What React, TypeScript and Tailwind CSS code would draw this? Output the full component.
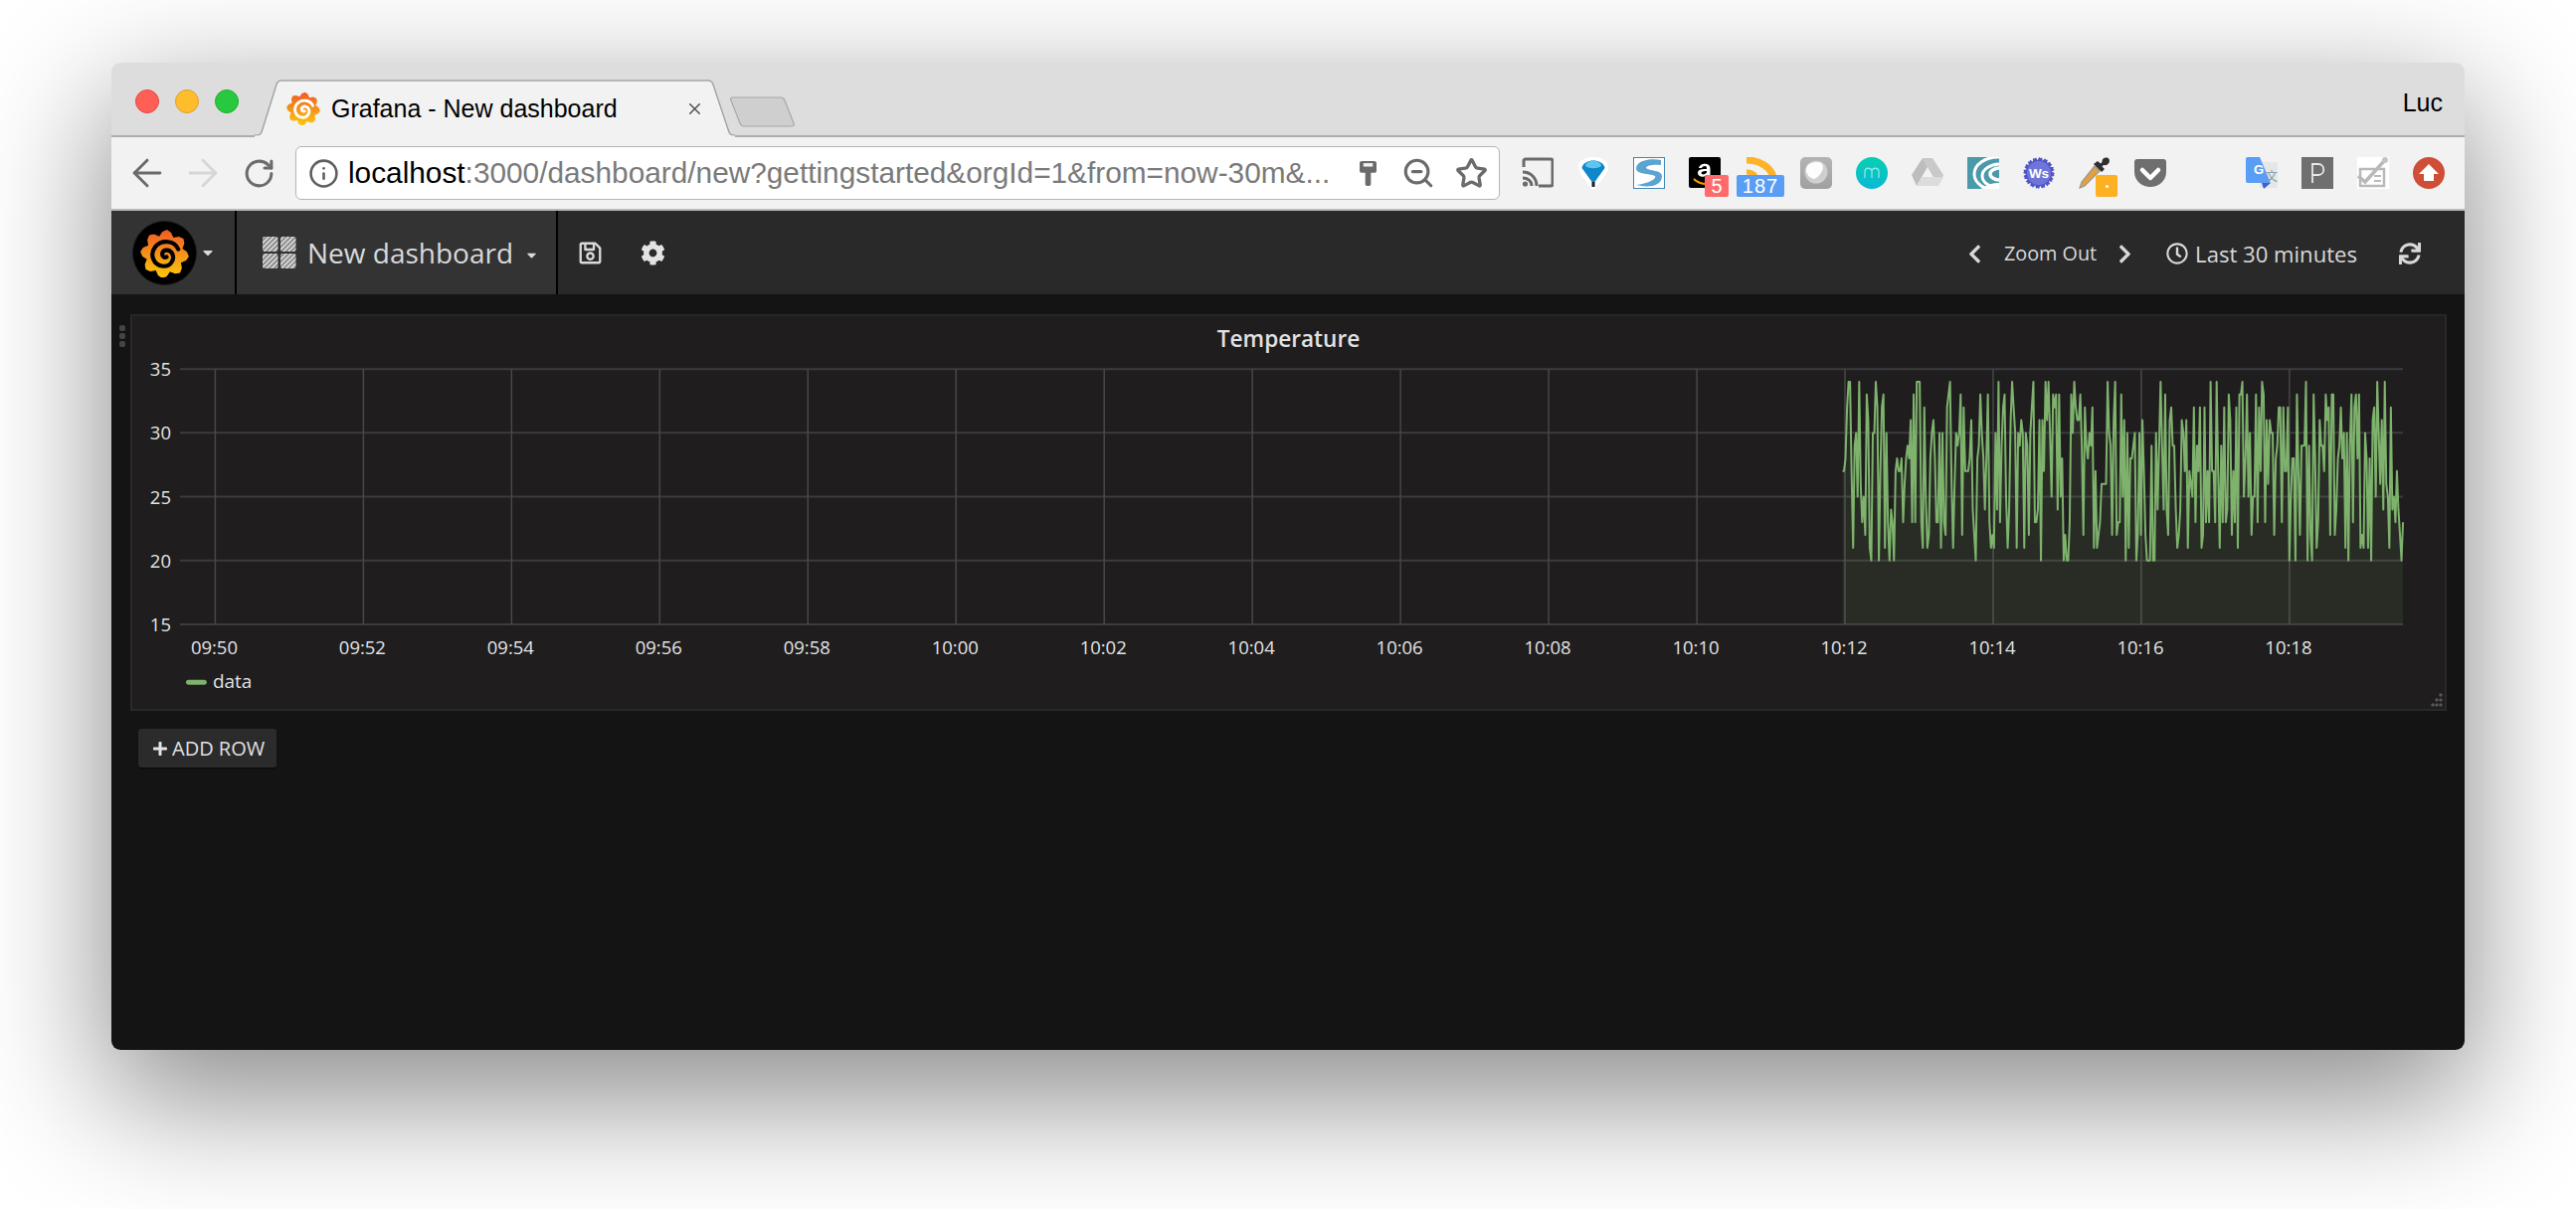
import React from "react";
import { ArrowLeft, ArrowRight, RotateCw, Info, ZoomOut, Star, X } from "lucide-react";
import { FaRegSave, FaCog, FaChevronLeft, FaChevronRight, FaRegClock, FaSync, FaPlus, FaCaretDown } from "react-icons/fa";

function gearPath(teeth: number, R: number, r: number, cx: number, cy: number) {
  const pts: string[] = [];
  const n = teeth * 4;
  for (let i = 0; i < n; i++) {
    const a = (i / n) * Math.PI * 2 - Math.PI / 2 + 0.1;
    const rad = i % 4 === 0 ? R : i % 4 === 2 ? r : (R + r) / 2 + 2;
    pts.push(`${(cx + rad * Math.cos(a)).toFixed(1)},${(cy + rad * Math.sin(a)).toFixed(1)}`);
  }
  return pts.join(" ");
}

function GrafanaMark({ size, inner, id }: { size: number; inner: string; id: string }) {
  return (
    <svg width={size} height={size} viewBox="0 0 100 100">
      <defs>
        <linearGradient id={id} x1="0" y1="0" x2="0" y2="1">
          <stop offset="0" stopColor="#f05a28" />
          <stop offset="1" stopColor="#fbca0a" />
        </linearGradient>
      </defs>
      <polygon points={gearPath(8, 50, 38, 50, 52)} fill={`url(#${id})`} />
      <path
        d="M78 42 C70 24 44 22 31 37 C19 52 26 75 47 77 C63 78 72 62 65 50 C59 41 46 43 45 52 C45 58 50 60 54 58"
        fill="none"
        stroke={inner}
        strokeWidth="8.500"
        strokeLinecap="round"
      />
    </svg>
  );
}

function DashIcon() {
  return (
    <svg width="34" height="32" viewBox="0 0 34 32">
      <defs>
        <pattern id="hatch" width="3.500" height="3.500" patternUnits="userSpaceOnUse" patternTransform="rotate(-45)">
          <rect width="3.500" height="3.500" fill="#7d7d7d" />
          <rect width="3.500" height="2" fill="#d8d8d8" />
        </pattern>
      </defs>
      <rect x="0" y="0" width="15.5" height="15" rx="2" fill="url(#hatch)" />
      <rect x="18" y="0" width="15.5" height="15" rx="2" fill="url(#hatch)" />
      <rect x="0" y="17" width="15.5" height="15" rx="2" fill="url(#hatch)" />
      <rect x="18" y="17" width="15.5" height="15" rx="2" fill="url(#hatch)" />
    </svg>
  );
}

function Badge({ bg, w, left, children }: { bg: string; w: string; left: string; children?: React.ReactNode }) {
  return (
    <span className={`absolute top-[18px] h-[22px] rounded-[2px] flex items-center justify-center text-white text-[20px] leading-none font-['Liberation_Sans',sans-serif] ${bg} ${w} ${left}`}>
      {children}
    </span>
  );
}

function Ext({ children }: { children: React.ReactNode }) {
  return (
    <div className="w-[56px] h-[54px] flex items-center justify-center">
      <div className="relative w-[32px] h-[32px]">{children}</div>
    </div>
  );
}

const svg32 = { width: 32, height: 32, viewBox: "0 0 32 32", className: "block" };

function Extensions() {
  return (
    <>
      <Ext>
        <svg {...svg32}>
          <path d="M2 10 V4 a2 2 0 0 1 2-2 H29 a2 2 0 0 1 2 2 V27 a2 2 0 0 1-2 2 H17" fill="none" stroke="#6b6b6b" strokeWidth="3" />
          <path d="M1 15 C9 15 15 21 15 29 M1 21 C6 21 10 24 10 29" fill="none" stroke="#6b6b6b" strokeWidth="3" />
          <circle cx="3.5" cy="27" r="2.6" fill="#6b6b6b" />
        </svg>
      </Ext>
      <Ext>
        <svg {...svg32}>
          <path d="M18 32 L14 32 C10 25 1 17 1 10 C1 3 9 0 16 0 C23 0 31 3 31 10 C31 17 22 25 18 32 Z" fill="#fff" />
          <path d="M16 27 L4.500 11 C5 6 11 3.500 16 3.500 C21 3.500 27 6 27.500 11 Z" fill="#0f87c9" />
          <path d="M16 3.500 C12 3.500 8 6 8 9 C12 12 20 12 24 9 C24 6 20 3.500 16 3.500 Z" fill="#5cc6ee" />
          <path d="M14.500 25 h3 v5 h-3 z" fill="#123" />
        </svg>
      </Ext>
      <Ext>
        <svg {...svg32}>
          <rect x="0.5" y="0.5" width="31" height="31" fill="#fff" stroke="#3e87b8" />
          <path d="M28 3 C18 1 4 3 3 11 C3 18 16 16 22 19 C24 22 14 27 3 28 C14 31 29 30 29 19 C29 13 16 14 13 11 C13 8 22 7 28 8 Z" fill="#5ba4d2" />
        </svg>
      </Ext>
      <Ext>
        <svg {...svg32}>
          <rect x="0" y="0" width="32" height="31" rx="2" fill="#000" />
          <path d="M10 11 C11 6 21 5 21.500 11 V20 H18 V18 C15 21 9 20 9 16 C9 12 14 12 18 12 V11 C18 8 13.500 9 13 11 Z M18 14 C15 14 12.500 14.500 12.500 16 C12.500 18 16.500 18 18 15.500 Z" fill="#fff" />
          <path d="M5 22 C9 26 13 27 18 27" stroke="#f90" strokeWidth="2" fill="none" />
        </svg>
        <Badge bg="bg-[#ff6b6b]" w="w-[24px]" left="left-[16px]">5</Badge>
      </Ext>
      <Ext>
        <svg width="32" height="20" viewBox="0 0 32 20" className="block">
          <path d="M2 3 C15 3 26 10 29 20" fill="none" stroke="#fdb22a" strokeWidth="7" />
          <path d="M2 15 C5 15 9 16 11 19" fill="none" stroke="#fdb22a" strokeWidth="5" />
        </svg>
        <Badge bg="bg-[#5a9df5]" w="w-[48px]" left="left-[-8px]"><span className="tracking-[1px]">187</span></Badge>
      </Ext>
      <Ext>
        <svg {...svg32}>
          <defs>
            <linearGradient id="gr1" x1="0" y1="0" x2="0" y2="1"><stop offset="0" stopColor="#b4b4b4" /><stop offset="1" stopColor="#a0a0a0" /></linearGradient>
          </defs>
          <rect width="32" height="32" rx="5" fill="url(#gr1)" />
          <circle cx="16" cy="15" r="11.500" fill="#cfcfcf" />
          <path d="M6 13 C6 7 12 5 17 5 C23 5 24 10 22 14 C20 18 17 21 14 22 C9 21 6 17 6 13 Z" fill="#fdfdfd" />
        </svg>
      </Ext>
      <Ext>
        <svg {...svg32}>
          <defs>
            <linearGradient id="gr2" x1="0" y1="0" x2="0" y2="1"><stop offset="0" stopColor="#06d0b0" /><stop offset="1" stopColor="#0bb8d4" /></linearGradient>
          </defs>
          <circle cx="16" cy="16" r="16" fill="url(#gr2)" />
          <path d="M9 21 V13 M9 15 C9 10 16 10 16 15 V21 M16 15 C16 10 23 10 23 15 V21" fill="none" stroke="#8be8e4" strokeWidth="1.300" />
        </svg>
      </Ext>
      <Ext>
        <svg {...svg32}>
          <path d="M11 1 H21 L32 18 L27 29 L16 10 Z" fill="#c9c9c9" />
          <path d="M11 1 L16 10 L5 29 L0 18 Z" fill="#bdbdbd" />
          <path d="M11 20 H32 L27 29 H5 Z" fill="#dcdcdc" />
        </svg>
      </Ext>
      <Ext>
        <svg {...svg32}>
          <rect width="32" height="32" fill="#4b9aab" />
          <ellipse cx="31" cy="17" rx="24" ry="17" fill="none" stroke="#fff" strokeWidth="3" />
          <ellipse cx="33" cy="19" rx="18" ry="12" fill="none" stroke="#fff" strokeWidth="3" />
          <ellipse cx="33" cy="17" rx="10" ry="6" fill="none" stroke="#fff" strokeWidth="3.500" />
          <path d="M14 32 C20 27 27 26 32 26 V32 Z" fill="#fff" />
        </svg>
      </Ext>
      <Ext>
        <svg {...svg32}>
          <polygon points={gearPath(16, 15, 12.800, 16, 16)} fill="#4f55c4" />
          <circle cx="16" cy="16" r="12" fill="#6f75d8" />
          <text x="16" y="21" textAnchor="middle" fontSize="13.500" fontWeight="700" fill="#fff" fontFamily="'Liberation Sans', sans-serif">Ws</text>
        </svg>
      </Ext>
      <Ext>
        <svg {...svg32}>
          <path d="M3 25 L1 31 L6 29 L21 14 L16 9 Z" fill="#e2a03c" stroke="#999" strokeWidth="1.200" />
          <path d="M15 7 L23 15 L26 12 L23.500 9.500 L25 8 C29 9 32 5 30.500 2 C28 -1 23 1 23.500 5 L22 6.500 L19 4 Z" fill="#2f2f2f" />
        </svg>
        <Badge bg="bg-[#fdb022]" w="w-[22px]" left="left-[17px]"><span className="w-[3px] h-[3px] rounded-full bg-white" /></Badge>
      </Ext>
      <Ext>
        <svg {...svg32}>
          <path d="M3 2 H29 A3 3 0 0 1 32 5 V15 C32 24 24 30 16 30 C8 30 0 24 0 15 V5 A3 3 0 0 1 3 2 Z" fill="#6f6f6f" />
          <path d="M8 13 L16 21 L24 13" fill="none" stroke="#fff" strokeWidth="4.500" strokeLinecap="round" strokeLinejoin="round" />
        </svg>
      </Ext>
      <div className="w-[56px]" />
      <Ext>
        <svg {...svg32}>
          <rect x="14" y="5" width="18" height="26" rx="1" fill="#e6e6e6" />
          <path d="M0 2 a2 2 0 0 1 2-2 H14 L25 26 H2 a2 2 0 0 1-2-2 Z" fill="#5a9df5" />
          <path d="M16 26 H25 L18 32 Z" fill="#3c63c9" />
          <text x="8" y="17" fontSize="13" fontWeight="700" fill="#fff" fontFamily="'Liberation Sans', sans-serif">G</text>
          <text x="20" y="24" fontSize="12" fill="#7f98a5" fontFamily="'Noto Sans CJK SC', sans-serif">文</text>
        </svg>
      </Ext>
      <Ext>
        <svg {...svg32}>
          <rect width="32" height="32" fill="#6f6f6f" />
          <path d="M11 26 V7 H17 C24 7 24 18 17 18 H11" fill="none" stroke="#e8e8e8" strokeWidth="1.800" />
        </svg>
      </Ext>
      <Ext>
        <svg {...svg32}>
          <rect width="32" height="32" fill="#fff" />
          <rect x="3" y="12" width="24" height="17" fill="none" stroke="#b9b9b9" strokeWidth="2.500" />
          <path d="M1 19 L8 25 L27 4" fill="none" stroke="#b9b9b9" strokeWidth="3.500" />
          <circle cx="28" cy="3" r="3" fill="#c4c4c4" />
          <path d="M17 19 H24 M17 24 H24" stroke="#b9b9b9" strokeWidth="2" />
        </svg>
      </Ext>
      <Ext>
        <svg {...svg32}>
          <circle cx="16" cy="16" r="16" fill="#cf4e38" />
          <path d="M16 7 L26 17 H21 V24 H11 V17 H6 Z" fill="#fff" />
        </svg>
      </Ext>
    </>
  );
}

function Chart() {
  const X0 = 215.500;
  const step = 149.09;
  const labels = ["09:50", "09:52", "09:54", "09:56", "09:58", "10:00", "10:02", "10:04", "10:06", "10:08", "10:10", "10:12", "10:14", "10:16", "10:18"];
  const yVals = [35, 30, 25, 20, 15];
  const yOf = (v: number) => 628 - (v - 15) * 12.85;

  let s = 20170311;
  const rnd = () => {
    s |= 0;
    s = (s + 0x6d2b79f5) | 0;
    let t = Math.imul(s ^ (s >>> 15), 1 | s);
    t = (t + Math.imul(t ^ (t >>> 7), 61 | t)) ^ t;
    return ((t ^ (t >>> 14)) >>> 0) / 4294967296;
  };
  const pts: [number, number][] = [];
  const n = 370;
  for (let i = 0; i <= n; i++) {
    const x = 1853 + (i / n) * 564;
    const v = i === 0 ? 27 : 20 + Math.floor(rnd() * 15);
    pts.push([x, yOf(v)]);
  }
  const line = pts.map((p, i) => `${i ? "L" : "M"}${p[0].toFixed(1)} ${p[1].toFixed(1)}`).join(" ");
  const area = `${line} L2417 628 L1853 628 Z`;

  return (
    <svg viewBox="132 363 2327 351" className="block w-full h-[351px]">
      {yVals.map((v) => (
        <g key={v}>
          <line x1="180" x2="2417" y1={yOf(v)} y2={yOf(v)} stroke="#3c3c3c" strokeWidth="2" />
          <text x="171" y={yOf(v) + 7} textAnchor="end" fontSize="18.500" fill="#e2e3e4">{v}</text>
        </g>
      ))}
      {labels.map((l, i) => (
        <g key={l}>
          <line x1={X0 + i * step} x2={X0 + i * step} y1="371" y2="628" stroke="#484848" strokeWidth="1.500" />
          <text x={X0 - 1 + i * step} y="658" textAnchor="middle" fontSize="18.500" fill="#e2e3e4">{l}</text>
        </g>
      ))}
      <path d={area} fill="#7eb26d" fillOpacity="0.1" />
      <path d={line} fill="none" stroke="#7eb26d" strokeWidth="2" strokeLinejoin="round" />
      <rect x="186" y="684" width="21" height="5" rx="2.500" fill="#7eb26d" />
      <text x="213" y="692" fontSize="19" fill="#e2e3e4">data</text>
    </svg>
  );
}

export default function App() {
  return (
    <div className="w-[2590px] h-[1216px] bg-white overflow-hidden pl-[112px] pt-[63px]">
      <div className="w-[2366px] h-[993px] rounded-[9px] overflow-hidden flex flex-col shadow-[0_44px_130px_6px_rgba(0,0,0,0.46)]">
        {/* tab strip */}
        <div className="h-[75px] bg-[#dddddd] border-b-2 border-[#adadad] flex items-end relative shrink-0 font-['Liberation_Sans',sans-serif]">
          <div className="flex items-center gap-[16px] pl-[24px] self-start pt-[27px]">
            <span className="w-[24px] h-[24px] rounded-full bg-[#ff5f57] border border-[#e2463f]" />
            <span className="w-[24px] h-[24px] rounded-full bg-[#ffbd2e] border border-[#dfa023]" />
            <span className="w-[24px] h-[24px] rounded-full bg-[#28c940] border border-[#1dad2b]" />
          </div>
          <div className="relative ml-[16px] w-[483px] h-[58px] mb-[-2px] flex items-center pl-[32px]">
            <svg viewBox="0 0 483 58" className="absolute inset-0 w-full h-full">
              <path d="M0 56 H3 C5 56 6 55 7 53 L22 5 C23 2 25 1 27 1 H456 C458 1 460 2 461 5 L477 53 C478 55 479 56 481 56 H483 V58 H0 Z" fill="#f2f2f2" stroke="#a5a5a5" strokeWidth="1.500" />
              <rect x="0" y="56.500" width="483" height="2" fill="#f2f2f2" />
            </svg>
            <div className="relative flex items-center">
              <GrafanaMark size={34} inner="#fff" id="fav" />
              <span className="ml-[11px] text-[25px] leading-none text-black whitespace-nowrap">Grafana - New dashboard</span>
            </div>
            <X className="absolute left-[433px] top-[20px] text-[#555]" size={19} strokeWidth={2} />
          </div>
          <div className="relative self-start mt-[34px] ml-[-5px] w-[65px] h-[31px]">
            <svg viewBox="0 0 65 31" className="block w-full h-full">
              <path d="M3 1 H51 C53 1 54 2 55 4 L64 27 C65 29 64 30 62 30 H14 C12 30 11 29 10 27 L1 4 C0 2 1 1 3 1 Z" fill="#cfcfcf" stroke="#a8a8a8" strokeWidth="1.200" />
            </svg>
          </div>
          <span className="ml-auto self-start mt-[28px] pr-[22px] text-[25px] leading-none text-black">Luc</span>
        </div>
        {/* toolbar */}
        <div className="h-[74px] bg-[#f2f2f2] border-b-2 border-[#b9b9b9] flex items-center pl-[8px] pr-[8px] shrink-0 font-['Liberation_Sans',sans-serif]">
          <div className="w-[56px] flex justify-center"><ArrowLeft size={44} strokeWidth={1.600} className="text-[#6b6b6b]" /></div>
          <div className="w-[56px] flex justify-center"><ArrowRight size={44} strokeWidth={1.600} className="text-[#d6d6d6]" /></div>
          <div className="w-[56px] flex justify-center"><RotateCw size={33} strokeWidth={2.200} className="text-[#6b6b6b]" /></div>
          <div className="ml-[9px] w-[1211px] h-[54px] bg-white rounded-[6px] border border-[#b5b5b5] flex items-center pl-[12px] shrink-0">
            <Info size={31} strokeWidth={2} className="text-[#5f5f5f] shrink-0" />
            <span className="ml-[9px] text-[29.800px] leading-none whitespace-nowrap text-[#7a7a7a]">
              <span className="text-black">localhost</span>:3000/dashboard/new?gettingstarted&amp;orgId=1&amp;from=now-30m&amp;...
            </span>
            <div className="ml-auto flex items-center pr-[11px]">
              <svg width="17" height="25" viewBox="0 0 18 36" preserveAspectRatio="none" className="block">
                <path d="M3 0 H15 a3 3 0 0 1 3 3 V14 a3 3 0 0 1-3 3 H12 V34 a2 2 0 0 1-2 2 H8 a2 2 0 0 1-2-2 V17 H3 a3 3 0 0 1-3-3 V3 a3 3 0 0 1 3-3 Z" fill="#6b6b6b" />
                <rect x="4" y="3" width="10" height="5" fill="#f2f2f2" />
              </svg>
              <ZoomOut size={34} strokeWidth={2.200} className="ml-[25px] text-[#6b6b6b]" />
              <Star size={33} strokeWidth={2.400} className="ml-[20px] text-[#6b6b6b]" />
            </div>
          </div>
          <div className="ml-[10px] flex items-center">
            <Extensions />
          </div>
        </div>
        {/* grafana nav */}
        <div className="h-[84px] bg-[#292929] flex items-stretch shrink-0 font-['Open_Sans',sans-serif] text-[#d8d9da]">
          <div className="w-[126px] bg-[#333333] border-r-2 border-black flex items-center pl-[21px]">
            <div className="w-[65px] h-[65px] rounded-full bg-black border border-[#1a1a1a] flex items-center justify-center">
              <GrafanaMark size={49} inner="#000" id="navlogo" />
            </div>
            <FaCaretDown size={16} className="ml-[3px] text-[#d8d9da]" />
          </div>
          <div className="w-[323px] bg-[#333333] border-r-2 border-black flex items-center pl-[26px]">
            <DashIcon />
            <span className="ml-[11px] text-[28px] leading-none text-[#d8d9da] whitespace-nowrap">New dashboard</span>
            <FaCaretDown size={15} className="ml-[11px] mt-[4px] text-[#d8d9da]" />
          </div>
          <div className="w-[64px] flex items-center justify-center"><FaRegSave size={25} className="text-[#d8d9da]" /></div>
          <div className="w-[62px] flex items-center justify-center"><FaCog size={25} className="text-[#e3e3e3]" /></div>
          <div className="ml-auto flex items-center pr-[44px] pt-[2px]">
            <FaChevronLeft size={21} className="text-[#d8d9da]" />
            <span className="ml-[19px] text-[19.800px] leading-none whitespace-nowrap">Zoom Out</span>
            <FaChevronRight size={21} className="ml-[18px] text-[#d8d9da]" />
            <FaRegClock size={22} className="ml-[31px] text-[#d8d9da]" />
            <span className="ml-[7px] text-[22.100px] leading-none whitespace-nowrap">Last 30 minutes</span>
            <FaSync size={22} className="ml-[42px] text-[#d8d9da]" />
          </div>
        </div>
        {/* main */}
        <div className="flex-1 bg-[#141414] pt-[20px] pl-[19px] pr-[18px] font-['Open_Sans',sans-serif]">
          <div className="relative h-[399px] bg-[#1f1d1e] border-2 border-[#292929] border-t-[#262626]">
            <div className="absolute left-[-13px] top-[9px] flex flex-col gap-[2px]">
              <span className="w-[6px] h-[6px] rounded-[2px] bg-[#444]" />
              <span className="w-[6px] h-[6px] rounded-[2px] bg-[#444]" />
              <span className="w-[6px] h-[6px] rounded-[2px] bg-[#444]" />
            </div>
            <div className="h-[45px] flex items-center justify-center text-[22.600px] font-semibold text-[#e0e1e2]">Temperature</div>
            <Chart />
            <svg width="18" height="18" viewBox="0 0 18 18" className="absolute right-[0px] bottom-[0px]">
              {[[14, 2], [10, 7], [14, 7], [6, 12], [10, 12], [14, 12]].map(([x, y]) => (
                <circle key={`${x}-${y}`} cx={x} cy={y + 2} r="1.800" fill="#555" />
              ))}
            </svg>
          </div>
          <button className="mt-[18px] ml-[8px] h-[39px] w-[139px] bg-[#2b2b2b] rounded-[3px] flex items-center pl-[14px] text-[20px] text-[#e0e1e2] shadow-[0_1px_1px_rgba(0,0,0,0.6)]">
            <FaPlus size={16} className="text-[#e3e3e3] mr-[4px]" />
            ADD ROW
          </button>
        </div>
      </div>
    </div>
  );
}
